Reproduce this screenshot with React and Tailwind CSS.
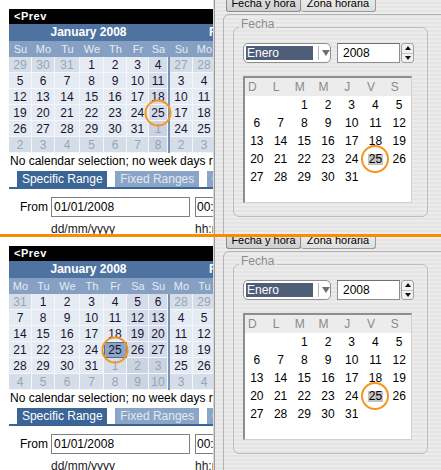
import React from "react";

// builds 42 cells: trailing days of previous month, the month, then next month
const makeCells = (lead, prevDays, days) => {
  const cells = [];
  for (let i = prevDays - lead + 1; i <= prevDays; i++) cells.push({ day: i, other: true });
  for (let i = 1; i <= days; i++) cells.push({ day: i, other: false });
  let n = 1;
  while (cells.length < 42) cells.push({ day: n++, other: true });
  return cells;
};

const FONT = "font-['Liberation_Sans',Arial,sans-serif]";

const Circle = ({ size }) => (
  <div
    className={`pointer-events-none absolute left-1/2 top-1/2 -translate-x-1/2 -translate-y-1/2 rounded-full border-2 border-[#f7941d] z-10 ${size}`}
  />
);

const cellClass = (c, wk, isSel) => {
  let cls = "bg-[#e5ebf2] text-[#1a1233]";
  if (c.other) cls = wk ? "bg-[#cad4e1] text-[#94a2b6]" : "bg-[#d4dde8] text-[#97a5b8]";
  else if (wk) cls = "bg-[#d3dce8] text-[#1a1233]";
  if (isSel) cls = "bg-[#8ea5c4] text-[#1a1233] outline outline-1 outline-[#4f6f98] -outline-offset-1";
  return cls;
};

const Month = ({ title, labels, cells, weekend, selected, circled }) => (
  <div className="w-[159px] shrink-0">
    <div className="h-[17px] bg-[#4f73a0] text-white text-[12px] font-bold leading-[17px] text-center whitespace-nowrap">
      {title}
    </div>
    <div className="h-[16px] bg-[#86a0c3] grid grid-cols-[23px_23px_25px_24px_23px_22px_19px] text-[11px] leading-[16px] text-[#e4ebf4]">
      {labels.map((l, i) => (
        <div key={i} className="text-center">
          {l}
        </div>
      ))}
    </div>
    <div className="grid grid-cols-[23px_23px_25px_24px_23px_22px_19px] bg-[#f3f6fa]">
      {cells.map((c, i) => {
        const isSel = selected && !c.other && c.day === selected;
        return (
          <div
            key={i}
            className={`relative h-[16px] border-r border-b border-[#f3f6fa] flex items-center justify-center text-[12px] ${cellClass(
              c,
              weekend.includes(i % 7),
              isSel
            )}`}
          >
            {c.day}
            {circled && !c.other && c.day === circled && <Circle size="w-[27px] h-[27px]" />}
          </div>
        );
      })}
    </div>
  </div>
);

// only the two leftmost columns of February are visible beside the window
const PartialMonth = ({ title, labels, cells, weekend }) => {
  const visible = cells.filter((_, i) => i % 7 < 2).map((c, k) => ({ ...c, col: k % 2 }));
  return (
    <div className="w-[46px] shrink-0 overflow-hidden">
      <div className="h-[17px] border-l-2 border-[#4f73a0] bg-[#4f73a0] text-white text-[12px] font-bold leading-[17px] pl-[39px] whitespace-nowrap">
        {title}
      </div>
      <div className="h-[16px] border-l-2 border-[#86a0c3] bg-[#86a0c3] grid grid-cols-[23px_23px] text-[11px] leading-[16px] text-[#e4ebf4]">
        {labels.slice(0, 2).map((l, i) => (
          <div key={i} className="text-center">
            {l}
          </div>
        ))}
      </div>
      <div className="border-l-2 border-[#7893b8] grid grid-cols-[23px_23px] bg-[#f3f6fa]">
        {visible.map((c, i) => (
          <div
            key={i}
            className={`h-[16px] border-r border-b border-[#f3f6fa] flex items-center justify-center text-[12px] ${cellClass(
              c,
              weekend.includes(c.col),
              false
            )}`}
          >
            {c.day}
          </div>
        ))}
      </div>
    </div>
  );
};

const WebPage = ({ mondayFirst }) => {
  const labels = mondayFirst
    ? ["Mo", "Tu", "We", "Th", "Fr", "Sa", "Su"]
    : ["Su", "Mo", "Tu", "We", "Th", "Fr", "Sa"];
  const weekend = mondayFirst ? [5, 6] : [6];
  const jan = mondayFirst ? makeCells(1, 31, 31) : makeCells(3, 31, 31);
  const feb = mondayFirst ? makeCells(4, 31, 29) : makeCells(5, 31, 29);

  return (
    <div className={`w-[215px] pt-[9px] pl-[9px] ${FONT}`}>
      <div className="h-[15px] bg-black text-white text-[11px] font-bold leading-[15px] pl-[5px] tracking-[0.5px]">
        &lt;Prev
      </div>
      <div className="flex">
        <Month
          title="January 2008"
          labels={labels}
          cells={jan}
          weekend={weekend}
          selected={mondayFirst ? 25 : null}
          circled={25}
        />
        <PartialMonth title="February 2008" labels={labels} cells={feb} weekend={weekend} />
      </div>
      <div className="mt-[1px] pl-[1px] w-[205px] overflow-hidden text-[12px] leading-[14px] text-black whitespace-nowrap">
        No calendar selection; no week days r
      </div>
      <div className="mt-[3px] flex h-[18px] pl-[8px] gap-[8px] border-b-2 border-[#3a6595] text-[12px] leading-[16px]">
        <div className="w-[91px] h-[16px] bg-[#3a6595] text-white text-center">Specific Range</div>
        <div className="w-[84px] h-[16px] bg-[#8ba5c6] text-[#e2e9f2] text-center">Fixed Ranges</div>
        <div className="w-[8px] h-[16px] overflow-hidden bg-[#8ba5c6] text-[#e2e9f2] pl-[5px] whitespace-nowrap">Q</div>
      </div>
      <div className="mt-[8px] flex items-center pl-[11px] text-[12px] text-black">
        <div className="w-[31px]">From</div>
        <div className="w-[139px] h-[20px] border border-[#7f7f7f] bg-white pl-[2px] leading-[18px]">01/01/2008</div>
        <div className="ml-[5px] w-[20px] h-[20px] overflow-hidden border border-r-0 border-[#7f7f7f] bg-white pl-[1px] leading-[18px] whitespace-nowrap">
          00:00
        </div>
      </div>
      <div className="mt-[5px] flex pl-[42px] text-[12px] leading-[14px] text-[#222]">
        <div className="w-[144px]">dd/mm/yyyy</div>
        <div className="w-[20px] overflow-hidden whitespace-nowrap">hh:mm</div>
      </div>
    </div>
  );
};

const JavaWindow = () => {
  const cells = [null, null, ...Array.from({ length: 31 }, (_, i) => i + 1)];
  while (cells.length < 35) cells.push(null);
  return (
    <div
      className={`absolute left-[214px] top-[-4px] w-[240px] h-[250px] border-l border-[#9c9c9c] shadow-[-1px_0_0_#d9d9d9] bg-[repeating-linear-gradient(180deg,#ececec_0px,#ececec_2px,#e4e4e4_2px,#e4e4e4_4px)] ${FONT} text-[11px] text-black`}
    >
      <div className="flex pl-[11px] h-[16px]">
        <div className="w-[75px] h-[16px] border border-t-0 border-[#8a8a8a] rounded-b-[3px] bg-[linear-gradient(#e2e2e2,#cfcfcf)] text-center leading-[15px]">
          Fecha y hora
        </div>
        <div className="w-[75px] h-[16px] border border-t-0 border-l-0 border-[#9a9a9a] rounded-b-[3px] bg-[linear-gradient(#ededed,#dedede)] text-center leading-[15px]">
          Zona horaria
        </div>
      </div>
      <div className="ml-[8px] mt-[2px] w-[230px] h-[240px] rounded-[6px] border border-[#b3b3b3] pt-[12px] pl-[9px]">
        <div className="relative w-[195px] h-[190px] rounded-[6px] border border-[#bdbdbd] pt-[15px] pl-[9px]">
          <span className="absolute left-[5px] top-[-10px] px-[2px] leading-[13px] text-[12px] text-[#8c8c8c] bg-[#e8e8e8]">
            Fecha
          </span>
          <div className="flex items-center h-[20px]">
            <div className="w-[88px] h-[20px] rounded-[5px] border border-[#8e8e8e] bg-white flex items-center pl-[2px]">
              <div className="w-[68px] h-[14px] bg-[#4e5e79] text-white text-[12px] leading-[14px] pl-[1px]">Enero</div>
              <div className="ml-[5px] w-px h-[14px] bg-[#b5b5b5]" />
              <svg width="8" height="6" viewBox="0 0 8 6" className="ml-[3px]">
                <path d="M0 0H8L4 6Z" fill="#6f6f6f" />
              </svg>
            </div>
            <div className="ml-[6px] w-[63px] h-[20px] border border-[#8e8e8e] border-t-[#6f6f6f] bg-white pl-[5px] text-[12px] leading-[18px]">
              2008
            </div>
            <div className="ml-px w-[13px] h-[20px] rounded-[3px] border border-[#a0a0a0] bg-[#f1f1f1] flex flex-col">
              <div className="flex-1 flex items-center justify-center border-b border-[#c4c4c4]">
                <svg width="6" height="4" viewBox="0 0 6 4">
                  <path d="M0 4H6L3 0Z" fill="#111" />
                </svg>
              </div>
              <div className="flex-1 flex items-center justify-center">
                <svg width="6" height="4" viewBox="0 0 6 4">
                  <path d="M0 0H6L3 4Z" fill="#111" />
                </svg>
              </div>
            </div>
          </div>
          <div className="mt-[13px] w-[169px] h-[127px] border-t-2 border-l-2 border-t-[#8e8e8e] border-l-[#8e8e8e] border-r border-b border-r-[#d0d0d0] border-b-[#d0d0d0] bg-white">
            <div className="grid grid-cols-7 h-[18px] bg-[#ececec] text-[#8a8a8a] text-[12px] leading-[18px]">
              {["D", "L", "M", "M", "J", "V", "S"].map((l, i) => (
                <div key={i} className="text-center pr-[9px]">
                  {l}
                </div>
              ))}
            </div>
            <div className="grid grid-cols-7 text-[12px]">
              {cells.map((d, i) => (
                <div key={i} className="relative h-[18px] flex items-center justify-center">
                  {d === 25 ? (
                    <>
                      <span className="bg-[#c4c4c4] px-[1px] leading-[11px]">25</span>
                      <Circle size="w-[28px] h-[28px]" />
                    </>
                  ) : (
                    d
                  )}
                </div>
              ))}
            </div>
          </div>
        </div>
      </div>
    </div>
  );
};

const Scene = ({ mondayFirst, height }) => (
  <div className={`relative overflow-hidden bg-white ${height}`}>
    <WebPage mondayFirst={mondayFirst} />
    <JavaWindow />
  </div>
);

export default function App() {
  return (
    <div className="w-[441px] h-[470px] overflow-hidden bg-white">
      <Scene height="h-[234px]" />
      <div className="h-[3px] bg-[#fb8c00]" />
      <Scene mondayFirst height="h-[233px]" />
    </div>
  );
}
